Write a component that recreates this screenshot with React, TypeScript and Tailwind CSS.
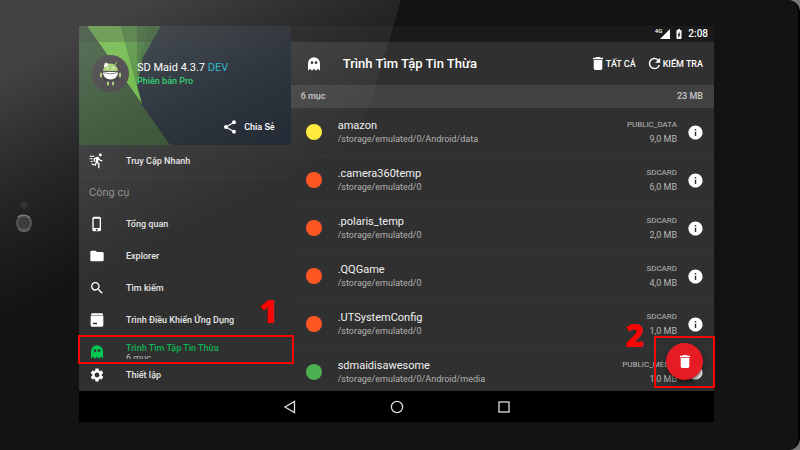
// src/App.tsx

import React from 'react';
import {
  MdBatteryChargingFull,
  MdFolder,
  MdInfo,
  MdPhoneIphone,
  MdRefresh,
  MdSearch,
  MdSettings,
  MdShare,
  MdSignalCellular4Bar,
} from 'react-icons/md';

type IconProps = {
  className?: string;
};

type CorpseItem = {
  name: string;
  path: string;
  location: string;
  size: string;
  color: string;
};

const items: CorpseItem[] = [
  { name: 'amazon', path: '/storage/emulated/0/Android/data', location: 'PUBLIC_DATA', size: '9,0 MB', color: 'bg-[#ffeb3b]' },
  { name: '.camera360temp', path: '/storage/emulated/0', location: 'SDCARD', size: '6,0 MB', color: 'bg-[#ff5722]' },
  { name: '.polaris_temp', path: '/storage/emulated/0', location: 'SDCARD', size: '2,0 MB', color: 'bg-[#ff5722]' },
  { name: '.QQGame', path: '/storage/emulated/0', location: 'SDCARD', size: '4,0 MB', color: 'bg-[#ff5722]' },
  { name: '.UTSystemConfig', path: '/storage/emulated/0', location: 'SDCARD', size: '1,0 MB', color: 'bg-[#ff5722]' },
  { name: 'sdmaidisawesome', path: '/storage/emulated/0/Android/media', location: 'PUBLIC_MEDIA', size: '1,0 MB', color: 'bg-[#4caf50]' },
];

const GhostIcon: React.FC<IconProps> = ({ className }) => (
  <svg viewBox="0 0 24 24" fill="currentColor" className={className} aria-hidden="true">
    <path
      fillRule="evenodd"
      d="M12 2a9 9 0 0 0-9 9v11l3-3 3 3 3-3 3 3 3-3 3 3V11a9 9 0 0 0-9-9ZM9 8a2 2 0 1 1 0 4 2 2 0 0 1 0-4Zm6 0a2 2 0 1 1 0 4 2 2 0 0 1 0-4Z"
    />
  </svg>
);

const TrashIcon: React.FC<IconProps> = ({ className }) => (
  <svg viewBox="5 3 14 18" fill="currentColor" className={className} aria-hidden="true">
    <path d="M6 19c0 1.100.9 2 2 2h8c1.100 0 2-.9 2-2V7H6v12ZM19 4h-3.500l-1-1h-5l-1 1H5v2h14V4Z" />
  </svg>
);

const RunFastIcon: React.FC<IconProps> = ({ className }) => (
  <svg viewBox="0 0 24 24" fill="currentColor" className={className} aria-hidden="true">
    <circle cx="17" cy="3" r="2.200" />
    <path d="m10.500 19 1-4.300 2.200 2.100V23h2v-7.600l-2.200-2 .7-3.300A7.500 7.500 0 0 0 20 12.700v-2.100c-1.900 0-3.600-1-4.400-2.400l-1-1.700c-.5-.8-1.500-1.200-2.500-.8L7 7.900v4.800h2V9.200l1.800-.7-1.700 8.200-4.900-1-.4 2 6.700 1.300Z" />
    <path d="M1 4h7v1.500H1zM1 8h4.500v1.500H1zM2.500 12h3v1.500h-3z" />
  </svg>
);

const AppBoxIcon: React.FC<IconProps> = ({ className }) => (
  <svg viewBox="0 0 24 24" fill="currentColor" className={className} aria-hidden="true">
    <path
      fillRule="evenodd"
      d="M5 2h14a2 2 0 0 1 2 2v1H3V4a2 2 0 0 1 2-2ZM2.500 5.500h19V20a2 2 0 0 1-2 2h-15a2 2 0 0 1-2-2V5.500ZM6 16v2.500h6V16H6Z"
    />
  </svg>
);

const MaidAvatar: React.FC<IconProps> = ({ className }) => (
  <svg viewBox="0 0 37 37" className={className} aria-hidden="true">
    <circle cx="18.500" cy="18.500" r="18.500" fill="#383538" />
    <path d="M14 10.500 12.500 8M23 10l1.500-2.700" stroke="#9ccc65" strokeWidth="1" />
    <path d="M11 16a7.500 7.500 0 0 1 15 0Z" fill="#9ccc65" />
    <circle cx="15.500" cy="12.800" r=".9" fill="#fff" />
    <circle cx="21.500" cy="12.800" r=".9" fill="#fff" />
    <path d="m12 10 2.500-2.500 2 1.500-1.500 2.500-3 .5Z" fill="#fff" />
    <path d="M11 17h15v1a7.500 6.500 0 0 1-15 0Z" fill="#fff" />
    <path d="M11 17.500q7.500 3 15 0" stroke="#555" strokeWidth=".8" fill="none" />
    <path d="M11 20q2 5 7.500 5t7.500-5v4q0 2-2 2H13q-2 0-2-2Z" fill="#2b2b2b" />
    <rect x="8" y="17.500" width="2" height="5" rx="1" fill="#9ccc65" />
    <rect x="27" y="17.500" width="2" height="5" rx="1" fill="#9ccc65" />
    <rect x="15" y="26.500" width="2" height="4" rx="1" fill="#9ccc65" />
    <rect x="20" y="26.500" width="2" height="4" rx="1" fill="#9ccc65" />
  </svg>
);

type NavItemProps = {
  icon: React.ReactNode;
  label: string;
  note?: string;
  active?: boolean;
};

const NavItem: React.FC<NavItemProps> = ({ icon, label, note, active }) => (
  <a href="#" className="h-8 shrink-0 flex items-center gap-[21px] pl-[10px]">
    <span className={active ? 'text-[#00c853]' : 'text-white'}>{icon}</span>
    <span className="flex flex-col whitespace-nowrap">
      <span className={active ? 'text-[9px] leading-3 font-medium text-[#0fb455]' : 'text-[9px] leading-3 font-medium text-[#e6e6e6]'}>
        {label}
      </span>
      {note && <span className="text-[9px] leading-[9px] text-[#bdbdbd]">{note}</span>}
    </span>
  </a>
);

const DrawerHeader: React.FC = () => (
  <header className="relative h-[119px] shrink-0 overflow-hidden bg-linear-to-br from-[#1c242c] to-[#1f2530]">
    <svg viewBox="0 0 212 119" preserveAspectRatio="xMinYMin slice" className="absolute inset-0 w-full h-full" aria-hidden="true">
      <path d="M0 0h8l83 119H0Z" fill="#304c2e" />
      <path d="M8 0h34l21 78Z" fill="#65b33c" />
      <path d="M42 0h16v60Z" fill="#4b8c32" />
      <path d="M58 0h12L58 60Z" fill="#3a7030" />
      <path d="M70 0h12L59 40Z" fill="#34642f" />
      <path d="M0 0h212v16H0Z" fill="#222" opacity=".28" />
    </svg>
    <div className="relative h-full flex flex-col justify-between pt-[29px] pb-[10px] pl-[13px] pr-4">
      <div className="flex items-center gap-2">
        <MaidAvatar className="size-[37px] shrink-0" />
        <div className="whitespace-nowrap">
          <h2 className="text-[11px] leading-[14px] text-white">
            SD Maid 4.3.7 <span className="text-[#18b0c9]">DEV</span>
          </h2>
          <p className="text-[9px] leading-3 font-medium text-[#18c860]">Phiên bản Pro</p>
        </div>
      </div>
      <button type="button" className="self-end flex items-center gap-[6px] text-[9px] leading-3 font-medium text-white">
        <MdShare className="size-4" />
        Chia Sẻ
      </button>
    </div>
  </header>
);

const Drawer: React.FC = () => (
  <aside className="relative z-10 w-1/3 shrink-0 flex flex-col bg-[#303030]">
    <DrawerHeader />
    <nav className="flex-1 min-h-0 flex flex-col overflow-hidden">
      <NavItem icon={<RunFastIcon className="size-4" />} label="Truy Cập Nhanh" />
      <h3 className="h-[31px] shrink-0 flex items-center pl-[10px] border-t border-[#383838] text-[11px] text-[#8e8e8e]">Công cụ</h3>
      <NavItem icon={<MdPhoneIphone className="size-4" />} label="Tổng quan" />
      <NavItem icon={<MdFolder className="size-4" />} label="Explorer" />
      <NavItem icon={<MdSearch className="size-4" />} label="Tìm kiếm" />
      <NavItem icon={<AppBoxIcon className="size-4" />} label="Trình Điều Khiển Ứng Dụng" />
      <NavItem icon={<GhostIcon className="size-4" />} label="Trình Tìm Tập Tin Thừa" note="6 mục" active />
    </nav>
    <div className="shrink-0">
      <NavItem icon={<MdSettings className="size-4" />} label="Thiết lập" />
    </div>
    {/* step 1 */}
    <div className="pointer-events-none absolute -left-px -right-[3px] bottom-[27px] h-[29px] border-2 border-[#f90505]">
      <span className="absolute right-[14px] bottom-[35px] text-[32px] leading-8 font-extrabold text-[#f90505] font-['Open_Sans',sans-serif]">1</span>
    </div>
  </aside>
);

const ItemRow: React.FC<{ item: CorpseItem }> = ({ item }) => (
  <li className="h-12 shrink-0 flex items-center pl-[15px] pr-[10px] shadow-[0_1px_0_#363636]">
    <span className={`size-4 shrink-0 rounded-full ${item.color}`} />
    <div className="flex-1 min-w-0 pl-4">
      <p className="text-[11px] leading-[14px] text-[#f0f0f0]">{item.name}</p>
      <p className="text-[9px] leading-3 text-[#b0b0b0]">{item.path}</p>
    </div>
    <div className="pr-[10px] text-right text-[#b8b8b8]">
      <p className="text-[8px] leading-[15px]">{item.location}</p>
      <p className="text-[9px] leading-[15px]">{item.size}</p>
    </div>
    <button type="button" aria-label={`Info ${item.name}`} className="text-white">
      <MdInfo className="size-[17px]" />
    </button>
  </li>
);

const Content: React.FC = () => (
  <main className="relative flex-1 min-w-0 flex flex-col bg-[#303030]">
    <div className="h-4 shrink-0 flex items-center justify-end pr-[6px] bg-[#1a1a1a] text-white">
      <span className="self-start pt-px text-[6px] leading-[8px] font-medium">4G</span>
      <MdSignalCellular4Bar className="size-3 -ml-[3px]" />
      <MdBatteryChargingFull className="size-3 ml-[2px]" />
      <span className="pl-[3px] text-[10px] leading-4 font-medium">2:08</span>
    </div>
    <div className="h-[43px] shrink-0 flex items-center pl-[15px] pr-[11px] text-white">
      <GhostIcon className="size-4" />
      <h1 className="flex-1 pl-[21px] text-[13px] leading-4 font-medium whitespace-nowrap">Trình Tìm Tập Tin Thừa</h1>
      <button type="button" className="flex items-center gap-[3px] mr-[10px] text-[9px] leading-3 font-medium">
        <TrashIcon className="w-[10px] h-[13px]" />
        TẤT CẢ
      </button>
      <button type="button" className="flex items-center text-[9px] leading-3 font-medium">
        <MdRefresh className="size-[17px]" />
        KIỂM TRA
      </button>
    </div>
    <div className="h-[23px] shrink-0 flex items-center justify-between pl-[10px] pr-[11px] bg-[#424242] text-[9px] text-[#c8c8c8] font-medium">
      <span>6 mục</span>
      <span>23 MB</span>
    </div>
    <ul className="flex-1 min-h-0 flex flex-col overflow-hidden">
      {items.map((item) => (
        <ItemRow key={item.name} item={item} />
      ))}
    </ul>
    <button
      type="button"
      aria-label="Delete all"
      className="absolute right-[11px] bottom-[11px] size-[37px] flex items-center justify-center rounded-full bg-[#e51c23] text-white shadow-md shadow-black/50"
    >
      <TrashIcon className="w-[10px] h-[13px]" />
    </button>
    {/* step 2 */}
    <div className="pointer-events-none absolute -right-px bottom-[3px] w-[61px] h-[52px] border-2 border-[#f90505]">
      <span className="absolute right-[69px] bottom-[35px] text-[32px] leading-8 font-extrabold text-[#f90505] font-['Open_Sans',sans-serif]">2</span>
    </div>
  </main>
);

const SystemNav: React.FC = () => (
  <div className="h-[31px] shrink-0 flex items-center justify-center bg-black text-[#dcdcdc]">
    <button type="button" aria-label="Back" className="w-[107px] flex justify-center">
      <svg viewBox="0 0 14 14" className="size-[14px]" fill="none" stroke="currentColor" strokeWidth="1.300">
        <path d="M11.500 1.500v11L2 7Z" />
      </svg>
    </button>
    <button type="button" aria-label="Home" className="w-[107px] flex justify-center">
      <svg viewBox="0 0 14 14" className="size-[14px]" fill="none" stroke="currentColor" strokeWidth="1.300">
        <circle cx="7" cy="7" r="5.600" />
      </svg>
    </button>
    <button type="button" aria-label="Recent apps" className="w-[107px] flex justify-center">
      <svg viewBox="0 0 14 14" className="size-[14px]" fill="none" stroke="currentColor" strokeWidth="1.300">
        <rect x="2" y="2" width="10" height="10" />
      </svg>
    </button>
  </div>
);

// Front camera and the light reflection across the glass
const Glass: React.FC = () => (
  <svg viewBox="0 0 420 450" className="pointer-events-none absolute z-20 left-0 top-0 w-[420px] h-[450px]" aria-hidden="true">
    <defs>
      <linearGradient id="glare" gradientUnits="userSpaceOnUse" x1="30" y1="60" x2="130" y2="260">
        <stop offset="0" stopColor="#fff" stopOpacity=".2" />
        <stop offset=".5" stopColor="#fff" stopOpacity=".08" />
        <stop offset="1" stopColor="#fff" stopOpacity="0" />
      </linearGradient>
      <radialGradient id="lens">
        <stop offset="0" stopColor="#222" />
        <stop offset=".25" stopColor="#4a4a4a" />
        <stop offset=".5" stopColor="#333" />
        <stop offset=".8" stopColor="#505050" />
        <stop offset="1" stopColor="#5a5a5a" />
      </radialGradient>
    </defs>
    <path d="M0 0h401l-77 260L0 430Z" fill="url(#glare)" />
    <circle cx="24" cy="205" r="4" fill="#303030" />
    <circle cx="24" cy="223" r="8" fill="url(#lens)" />
    <path d="M18 217a8.500 8.500 0 0 1 12 1" stroke="#8a8a8a" strokeWidth="1.200" fill="none" />
    <path d="M18 229a8.500 8.500 0 0 0 12 0" stroke="#7a7a7a" strokeWidth="1" fill="none" />
  </svg>
);

const App: React.FC = () => {
  return (
    <div className="bg-[#777] font-['Roboto',sans-serif]">
      <div className="relative h-screen flex flex-col pt-[26px] pb-7 pl-[79px] pr-[84px] overflow-hidden bg-[#131313] border-r-2 border-black rounded-r-xl">
        <div className="flex-1 min-h-0 flex">
          <Drawer />
          <Content />
        </div>
        <SystemNav />
        <Glass />
      </div>
    </div>
  );
};

export default App;
